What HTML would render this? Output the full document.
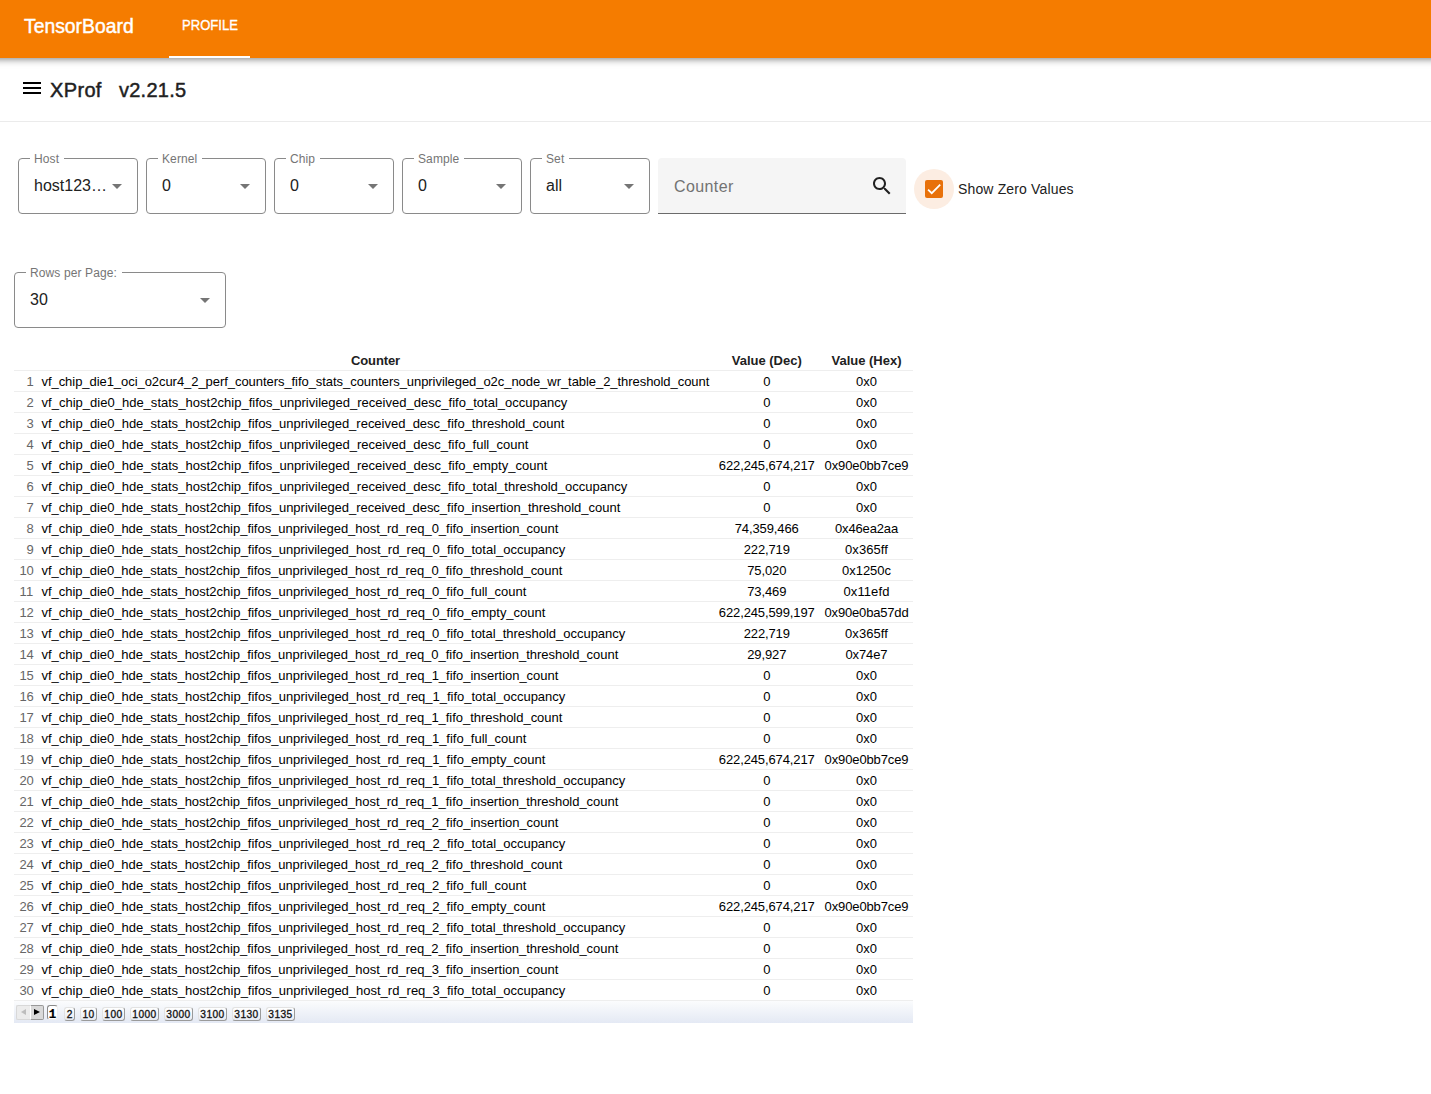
<!DOCTYPE html>
<html><head><meta charset="utf-8">
<style>
*{box-sizing:border-box}
html,body{margin:0;padding:0;background:#fff;width:1431px;height:1094px;overflow:hidden;font-family:"Liberation Sans",sans-serif}
.abs{position:absolute}
#tb{position:absolute;left:-20px;top:0;width:1471px;height:58px;background:#f57c00;box-shadow:0 2px 4px -1px rgba(0,0,0,.2),0 4px 5px 0 rgba(0,0,0,.14),0 1px 10px 0 rgba(0,0,0,.12);z-index:2}
#tbname{position:absolute;left:44px;top:14px;color:#fff;font-size:20px;font-weight:normal;-webkit-text-stroke:0.45px #fff;line-height:24px;white-space:nowrap;transform-origin:0 0;transform:scaleX(0.967)}
#tab{position:absolute;left:202px;top:17px;color:#fff;font-size:14.5px;font-weight:normal;-webkit-text-stroke:0.35px #fff;line-height:17px;transform-origin:0 0;transform:scaleX(0.9)}
#tabline{position:absolute;left:189px;top:56px;width:81px;height:2px;background:#fff}
#xbar{position:absolute;left:0;top:58px;width:1431px;height:64px;border-bottom:1px solid #ebebeb}
#menu{position:absolute;left:20px;top:76px}
#xtitle{position:absolute;left:50px;top:78px;font-size:20px;font-weight:normal;-webkit-text-stroke:0.45px #212121;color:#212121;line-height:24px;white-space:nowrap}
.sel{position:absolute;top:158px;width:120px;height:56px;border:1px solid #8a8a8a;border-radius:4px}
.sel .lab{position:absolute;left:11px;top:-7.5px;background:#fff;padding:0 5px 0 4px;font-size:12px;letter-spacing:0.12px;line-height:14px;color:#757575}
.sel .val{position:absolute;left:15px;top:17px;font-size:16px;line-height:19px;color:#212121;white-space:nowrap}
.sel .arr{position:absolute;top:25px;width:0;height:0;border-left:5px solid transparent;border-right:5px solid transparent;border-top:5px solid #757575}
#counter{position:absolute;left:658px;top:158px;width:248px;height:56px;background:#f5f5f5;border-radius:4px 4px 0 0;border-bottom:1px solid #6b6b6b}
#counter .ph{position:absolute;left:16px;top:19px;font-size:16px;line-height:19px;color:#727272;letter-spacing:0.4px}
#search{position:absolute;left:870px;top:174px}
#ripple{position:absolute;left:914px;top:169px;width:40px;height:40px;border-radius:50%;background:#fcede2}
#cbox{position:absolute;left:925px;top:180px;width:18px;height:18px;border-radius:2px;background:#e8710a}
#cblab{position:absolute;left:958px;top:181px;letter-spacing:0.15px;font-size:14px;line-height:17px;color:#212121;white-space:nowrap}
#rpp{left:14px;top:272px;width:212px}

#gt{position:absolute;left:14px;top:350px;width:899px}
.gvt{font-family:"Liberation Sans",sans-serif;font-size:13px;border-spacing:0;border-collapse:separate;margin:0;background:#fff;table-layout:fixed;width:899px}
.gvt .th{font-weight:bold;text-align:center;padding:3px 3px 1px;border-bottom:1px solid #eee;color:#212121;line-height:16px;height:21px}
.gvt .td{padding:3px 4px 1px;border-bottom:1px solid #eee;white-space:nowrap;color:#000;line-height:16px;height:21px}
.gvt .seq{color:#666;text-align:right}
.gvt .c{text-align:center}
.pg{position:absolute;left:0;top:651px;width:899px;height:22px;background:linear-gradient(#fbfcfd,#e4e9f4)}
.pg span{position:absolute;box-sizing:border-box;font-family:"Liberation Sans",sans-serif;font-weight:normal;-webkit-text-stroke:0.3px #111;font-size:10.2px;line-height:12px;letter-spacing:0.4px;text-indent:0.4px;text-align:center;color:#111}
.pg .pprev{left:2px;top:4px;width:14px;height:15px;background:#ececec;border:1px solid #d8d8d8;border-right:none;border-radius:2px 0 0 2px}
.pg .pprev i{position:absolute;left:4px;top:3px;width:0;height:0;border-top:3px solid transparent;border-bottom:3px solid transparent;border-right:5px solid #bdbdbd}
.pg .pnext{left:16px;top:4px;width:14px;height:15px;background:#d9d9d9;border:1px solid #999;border-left:1px solid #fff;border-radius:0 2px 2px 0}
.pg .pnext i{position:absolute;left:3px;top:3px;width:0;height:0;border-top:3px solid transparent;border-bottom:3px solid transparent;border-left:6px solid #000}
.pg .pn{top:6px;height:14px;background:linear-gradient(#fff,#e8ebf3);border:1px solid #e2e2e2;border-right-color:#9a9a9a;border-bottom-color:#9a9a9a;border-radius:3px;line-height:12px;padding-top:1px}
.pg .pn.cur{top:4px;height:15px;background:#fff;border:1px solid #eee;border-top-color:#8a8a8a;border-left-color:#8a8a8a;color:#000;padding-top:3px;-webkit-text-stroke:0.2px #000;font-family:"Liberation Mono",monospace;font-weight:bold;letter-spacing:0;text-indent:0;font-size:12.5px;line-height:13px}
</style></head>
<body>
<div id="tb">
  <div id="tbname">TensorBoard</div>
  <div id="tab">PROFILE</div>
  <div id="tabline"></div>
</div>
<div id="xbar"></div>
<svg id="menu" width="24" height="24" viewBox="0 0 24 24"><path d="M3 18h18v-2H3v2zm0-5h18v-2H3v2zm0-7v2h18V6H3z" fill="#000"/></svg>
<div id="xtitle"><span style="letter-spacing:0.35px">XProf</span></div><div id="xtitle" style="left:119px;letter-spacing:0.25px">v2.21.5</div>

<div class="sel" style="left:18px"><div class="lab">Host</div><div class="val">host123…</div><div class="arr" style="left:93px"></div></div>
<div class="sel" style="left:146px"><div class="lab">Kernel</div><div class="val">0</div><div class="arr" style="left:93px"></div></div>
<div class="sel" style="left:274px"><div class="lab">Chip</div><div class="val">0</div><div class="arr" style="left:93px"></div></div>
<div class="sel" style="left:402px"><div class="lab">Sample</div><div class="val">0</div><div class="arr" style="left:93px"></div></div>
<div class="sel" style="left:530px"><div class="lab">Set</div><div class="val">all</div><div class="arr" style="left:93px"></div></div>
<div id="counter"><div class="ph">Counter</div></div>
<svg id="search" width="24" height="24" viewBox="0 0 24 24"><path d="M15.5 14h-.79l-.28-.27C15.41 12.59 16 11.11 16 9.5 16 5.91 13.09 3 9.5 3S3 5.91 3 9.5 5.91 16 9.5 16c1.610 0 3.090-.59 4.230-1.570l.27.28v.79l5 4.990L20.490 19l-4.990-5zm-6 0C7.010 14 5 11.990 5 9.500S7.010 5 9.500 5 14 7.010 14 9.500 11.990 14 9.500 14z" fill="#212121"/></svg>
<div id="ripple"></div>
<div id="cbox"><svg width="18" height="18" viewBox="0 0 24 24"><path d="M4.1 12.7L9 17.6 20.3 6.3" fill="none" stroke="#fff" stroke-width="2.35"/></svg></div>
<div id="cblab">Show Zero Values</div>

<div class="sel" id="rpp"><div class="lab">Rows per Page:</div><div class="val">30</div><div class="arr" style="left:185px"></div></div>

<!--TABLE-->
<div id="gt"><table class="gvt"><colgroup><col style="width:23.5px"><col style="width:676px"><col style="width:106.5px"><col style="width:93px"></colgroup><thead><tr class="hd"><th class="th"></th><th class="th"><span style="letter-spacing:-0.1183px">Counter</span></th><th class="th"><span style="letter-spacing:-0.0085px">Value (Dec)</span></th><th class="th"><span style="letter-spacing:-0.0085px">Value (Hex)</span></th></tr></thead><tbody>
<tr><td class="td seq"><span style="letter-spacing:-0.2344px">1</span></td><td class="td"><span style="letter-spacing:-0.0544px">vf_chip_die1_oci_o2cur4_2_perf_counters_fifo_stats_counters_unprivileged_o2c_node_wr_table_2_threshold_count</span></td><td class="td c"><span style="letter-spacing:-0.2344px">0</span></td><td class="td c"><span style="letter-spacing:0.0104px">0x0</span></td></tr>
<tr><td class="td seq"><span style="letter-spacing:-0.2344px">2</span></td><td class="td"><span style="letter-spacing:0.0127px">vf_chip_die0_hde_stats_host2chip_fifos_unprivileged_received_desc_fifo_total_occupancy</span></td><td class="td c"><span style="letter-spacing:-0.2344px">0</span></td><td class="td c"><span style="letter-spacing:0.0104px">0x0</span></td></tr>
<tr><td class="td seq"><span style="letter-spacing:-0.2344px">3</span></td><td class="td"><span style="letter-spacing:-0.0055px">vf_chip_die0_hde_stats_host2chip_fifos_unprivileged_received_desc_fifo_threshold_count</span></td><td class="td c"><span style="letter-spacing:-0.2344px">0</span></td><td class="td c"><span style="letter-spacing:0.0104px">0x0</span></td></tr>
<tr><td class="td seq"><span style="letter-spacing:-0.2344px">4</span></td><td class="td"><span style="letter-spacing:0.0050px">vf_chip_die0_hde_stats_host2chip_fifos_unprivileged_received_desc_fifo_full_count</span></td><td class="td c"><span style="letter-spacing:-0.2344px">0</span></td><td class="td c"><span style="letter-spacing:0.0104px">0x0</span></td></tr>
<tr><td class="td seq"><span style="letter-spacing:-0.2344px">5</span></td><td class="td"><span style="letter-spacing:0.0076px">vf_chip_die0_hde_stats_host2chip_fifos_unprivileged_received_desc_fifo_empty_count</span></td><td class="td c"><span style="letter-spacing:-0.1094px">622,245,674,217</span></td><td class="td c"><span style="letter-spacing:-0.1120px">0x90e0bb7ce9</span></td></tr>
<tr><td class="td seq"><span style="letter-spacing:-0.2344px">6</span></td><td class="td"><span style="letter-spacing:0.0037px">vf_chip_die0_hde_stats_host2chip_fifos_unprivileged_received_desc_fifo_total_threshold_occupancy</span></td><td class="td c"><span style="letter-spacing:-0.2344px">0</span></td><td class="td c"><span style="letter-spacing:0.0104px">0x0</span></td></tr>
<tr><td class="td seq"><span style="letter-spacing:-0.2344px">7</span></td><td class="td"><span style="letter-spacing:-0.0090px">vf_chip_die0_hde_stats_host2chip_fifos_unprivileged_received_desc_fifo_insertion_threshold_count</span></td><td class="td c"><span style="letter-spacing:-0.2344px">0</span></td><td class="td c"><span style="letter-spacing:0.0104px">0x0</span></td></tr>
<tr><td class="td seq"><span style="letter-spacing:-0.2344px">8</span></td><td class="td"><span style="letter-spacing:-0.0249px">vf_chip_die0_hde_stats_host2chip_fifos_unprivileged_host_rd_req_0_fifo_insertion_count</span></td><td class="td c"><span style="letter-spacing:-0.1094px">74,359,466</span></td><td class="td c"><span style="letter-spacing:-0.1528px">0x46ea2aa</span></td></tr>
<tr><td class="td seq"><span style="letter-spacing:-0.2344px">9</span></td><td class="td"><span style="letter-spacing:-0.0107px">vf_chip_die0_hde_stats_host2chip_fifos_unprivileged_host_rd_req_0_fifo_total_occupancy</span></td><td class="td c"><span style="letter-spacing:-0.1451px">222,719</span></td><td class="td c"><span style="letter-spacing:0.0826px">0x365ff</span></td></tr>
<tr><td class="td seq"><span style="letter-spacing:-0.2344px">10</span></td><td class="td"><span style="letter-spacing:-0.0289px">vf_chip_die0_hde_stats_host2chip_fifos_unprivileged_host_rd_req_0_fifo_threshold_count</span></td><td class="td c"><span style="letter-spacing:-0.1302px">75,020</span></td><td class="td c"><span style="letter-spacing:-0.0246px">0x1250c</span></td></tr>
<tr><td class="td seq"><span style="letter-spacing:0.2500px">11</span></td><td class="td"><span style="letter-spacing:-0.0199px">vf_chip_die0_hde_stats_host2chip_fifos_unprivileged_host_rd_req_0_fifo_full_count</span></td><td class="td c"><span style="letter-spacing:-0.1302px">73,469</span></td><td class="td c"><span style="letter-spacing:0.0982px">0x11efd</span></td></tr>
<tr><td class="td seq"><span style="letter-spacing:-0.2344px">12</span></td><td class="td"><span style="letter-spacing:-0.0170px">vf_chip_die0_hde_stats_host2chip_fifos_unprivileged_host_rd_req_0_fifo_empty_count</span></td><td class="td c"><span style="letter-spacing:-0.1094px">622,245,599,197</span></td><td class="td c"><span style="letter-spacing:-0.1732px">0x90e0ba57dd</span></td></tr>
<tr><td class="td seq"><span style="letter-spacing:-0.2344px">13</span></td><td class="td"><span style="letter-spacing:-0.0173px">vf_chip_die0_hde_stats_host2chip_fifos_unprivileged_host_rd_req_0_fifo_total_threshold_occupancy</span></td><td class="td c"><span style="letter-spacing:-0.1451px">222,719</span></td><td class="td c"><span style="letter-spacing:0.0826px">0x365ff</span></td></tr>
<tr><td class="td seq"><span style="letter-spacing:-0.2344px">14</span></td><td class="td"><span style="letter-spacing:-0.0299px">vf_chip_die0_hde_stats_host2chip_fifos_unprivileged_host_rd_req_0_fifo_insertion_threshold_count</span></td><td class="td c"><span style="letter-spacing:-0.1302px">29,927</span></td><td class="td c"><span style="letter-spacing:-0.1120px">0x74e7</span></td></tr>
<tr><td class="td seq"><span style="letter-spacing:-0.2344px">15</span></td><td class="td"><span style="letter-spacing:-0.0249px">vf_chip_die0_hde_stats_host2chip_fifos_unprivileged_host_rd_req_1_fifo_insertion_count</span></td><td class="td c"><span style="letter-spacing:-0.2344px">0</span></td><td class="td c"><span style="letter-spacing:0.0104px">0x0</span></td></tr>
<tr><td class="td seq"><span style="letter-spacing:-0.2344px">16</span></td><td class="td"><span style="letter-spacing:-0.0107px">vf_chip_die0_hde_stats_host2chip_fifos_unprivileged_host_rd_req_1_fifo_total_occupancy</span></td><td class="td c"><span style="letter-spacing:-0.2344px">0</span></td><td class="td c"><span style="letter-spacing:0.0104px">0x0</span></td></tr>
<tr><td class="td seq"><span style="letter-spacing:-0.2344px">17</span></td><td class="td"><span style="letter-spacing:-0.0289px">vf_chip_die0_hde_stats_host2chip_fifos_unprivileged_host_rd_req_1_fifo_threshold_count</span></td><td class="td c"><span style="letter-spacing:-0.2344px">0</span></td><td class="td c"><span style="letter-spacing:0.0104px">0x0</span></td></tr>
<tr><td class="td seq"><span style="letter-spacing:-0.2344px">18</span></td><td class="td"><span style="letter-spacing:-0.0199px">vf_chip_die0_hde_stats_host2chip_fifos_unprivileged_host_rd_req_1_fifo_full_count</span></td><td class="td c"><span style="letter-spacing:-0.2344px">0</span></td><td class="td c"><span style="letter-spacing:0.0104px">0x0</span></td></tr>
<tr><td class="td seq"><span style="letter-spacing:-0.2344px">19</span></td><td class="td"><span style="letter-spacing:-0.0170px">vf_chip_die0_hde_stats_host2chip_fifos_unprivileged_host_rd_req_1_fifo_empty_count</span></td><td class="td c"><span style="letter-spacing:-0.1094px">622,245,674,217</span></td><td class="td c"><span style="letter-spacing:-0.1120px">0x90e0bb7ce9</span></td></tr>
<tr><td class="td seq"><span style="letter-spacing:-0.2344px">20</span></td><td class="td"><span style="letter-spacing:-0.0173px">vf_chip_die0_hde_stats_host2chip_fifos_unprivileged_host_rd_req_1_fifo_total_threshold_occupancy</span></td><td class="td c"><span style="letter-spacing:-0.2344px">0</span></td><td class="td c"><span style="letter-spacing:0.0104px">0x0</span></td></tr>
<tr><td class="td seq"><span style="letter-spacing:-0.2344px">21</span></td><td class="td"><span style="letter-spacing:-0.0299px">vf_chip_die0_hde_stats_host2chip_fifos_unprivileged_host_rd_req_1_fifo_insertion_threshold_count</span></td><td class="td c"><span style="letter-spacing:-0.2344px">0</span></td><td class="td c"><span style="letter-spacing:0.0104px">0x0</span></td></tr>
<tr><td class="td seq"><span style="letter-spacing:-0.2344px">22</span></td><td class="td"><span style="letter-spacing:-0.0249px">vf_chip_die0_hde_stats_host2chip_fifos_unprivileged_host_rd_req_2_fifo_insertion_count</span></td><td class="td c"><span style="letter-spacing:-0.2344px">0</span></td><td class="td c"><span style="letter-spacing:0.0104px">0x0</span></td></tr>
<tr><td class="td seq"><span style="letter-spacing:-0.2344px">23</span></td><td class="td"><span style="letter-spacing:-0.0107px">vf_chip_die0_hde_stats_host2chip_fifos_unprivileged_host_rd_req_2_fifo_total_occupancy</span></td><td class="td c"><span style="letter-spacing:-0.2344px">0</span></td><td class="td c"><span style="letter-spacing:0.0104px">0x0</span></td></tr>
<tr><td class="td seq"><span style="letter-spacing:-0.2344px">24</span></td><td class="td"><span style="letter-spacing:-0.0289px">vf_chip_die0_hde_stats_host2chip_fifos_unprivileged_host_rd_req_2_fifo_threshold_count</span></td><td class="td c"><span style="letter-spacing:-0.2344px">0</span></td><td class="td c"><span style="letter-spacing:0.0104px">0x0</span></td></tr>
<tr><td class="td seq"><span style="letter-spacing:-0.2344px">25</span></td><td class="td"><span style="letter-spacing:-0.0199px">vf_chip_die0_hde_stats_host2chip_fifos_unprivileged_host_rd_req_2_fifo_full_count</span></td><td class="td c"><span style="letter-spacing:-0.2344px">0</span></td><td class="td c"><span style="letter-spacing:0.0104px">0x0</span></td></tr>
<tr><td class="td seq"><span style="letter-spacing:-0.2344px">26</span></td><td class="td"><span style="letter-spacing:-0.0170px">vf_chip_die0_hde_stats_host2chip_fifos_unprivileged_host_rd_req_2_fifo_empty_count</span></td><td class="td c"><span style="letter-spacing:-0.1094px">622,245,674,217</span></td><td class="td c"><span style="letter-spacing:-0.1120px">0x90e0bb7ce9</span></td></tr>
<tr><td class="td seq"><span style="letter-spacing:-0.2344px">27</span></td><td class="td"><span style="letter-spacing:-0.0173px">vf_chip_die0_hde_stats_host2chip_fifos_unprivileged_host_rd_req_2_fifo_total_threshold_occupancy</span></td><td class="td c"><span style="letter-spacing:-0.2344px">0</span></td><td class="td c"><span style="letter-spacing:0.0104px">0x0</span></td></tr>
<tr><td class="td seq"><span style="letter-spacing:-0.2344px">28</span></td><td class="td"><span style="letter-spacing:-0.0299px">vf_chip_die0_hde_stats_host2chip_fifos_unprivileged_host_rd_req_2_fifo_insertion_threshold_count</span></td><td class="td c"><span style="letter-spacing:-0.2344px">0</span></td><td class="td c"><span style="letter-spacing:0.0104px">0x0</span></td></tr>
<tr><td class="td seq"><span style="letter-spacing:-0.2344px">29</span></td><td class="td"><span style="letter-spacing:-0.0249px">vf_chip_die0_hde_stats_host2chip_fifos_unprivileged_host_rd_req_3_fifo_insertion_count</span></td><td class="td c"><span style="letter-spacing:-0.2344px">0</span></td><td class="td c"><span style="letter-spacing:0.0104px">0x0</span></td></tr>
<tr><td class="td seq"><span style="letter-spacing:-0.2344px">30</span></td><td class="td"><span style="letter-spacing:-0.0107px">vf_chip_die0_hde_stats_host2chip_fifos_unprivileged_host_rd_req_3_fifo_total_occupancy</span></td><td class="td c"><span style="letter-spacing:-0.2344px">0</span></td><td class="td c"><span style="letter-spacing:0.0104px">0x0</span></td></tr>
</tbody></table>
<div class="pg"><span class="pprev"><i></i></span><span class="pnext"><i></i></span><span class="pn cur" style="left:33.0px;width:11.0px">1</span><span class="pn" style="left:50.0px;width:11.0px">2</span><span class="pn" style="left:66.0px;width:16.5px">10</span><span class="pn" style="left:88.0px;width:22.5px">100</span><span class="pn" style="left:116.0px;width:28.6px">1000</span><span class="pn" style="left:150.0px;width:28.5px">3000</span><span class="pn" style="left:184.0px;width:28.6px">3100</span><span class="pn" style="left:218.0px;width:28.6px">3130</span><span class="pn" style="left:252.0px;width:28.5px">3135</span></div></div>
<!--/TABLE-->
</body></html>
